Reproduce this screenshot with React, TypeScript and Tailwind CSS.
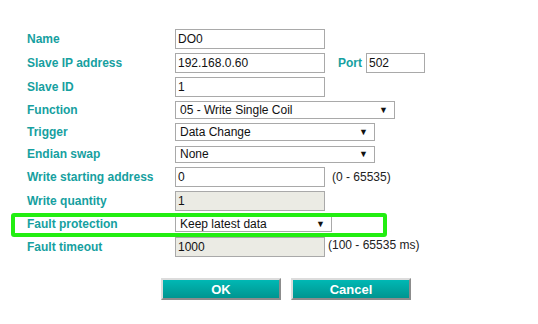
const labelCls = "w-[148px] shrink-0 text-[12px] font-bold text-[#16a0a0]"

function TextBox({ value, width = "w-[150px]", disabled = false }: { value: string; width?: string; disabled?: boolean }) {
  return (
    <div
      className={`${width} h-[20px] border border-[#a9a9a9] pl-[2px] flex items-center text-[12px] text-[#111] ${disabled ? "bg-[#ebebe4]" : "bg-white"}`}
    >
      {value}
    </div>
  )
}

function Dropdown({ value, width, height = "h-[18px]" }: { value: string; width: string; height?: string }) {
  return (
    <div className={`${width} ${height} border border-[#a9a9a9] bg-white flex items-center justify-between pl-[4px] pr-[6px] text-[12px] text-[#111]`}>
      <span>{value}</span>
      <span className="text-[9px] leading-none">▼</span>
    </div>
  )
}

function Row({ label, height = "h-[24px]", children }: { label: string; height?: string; children: React.ReactNode }) {
  return (
    <div className={`flex items-center ${height}`}>
      <div className={labelCls}>{label}</div>
      {children}
    </div>
  )
}

export default function App() {
  return (
    <div className="w-[538px] h-[324px] bg-white relative" style={{ fontFamily: '"Liberation Sans", Arial, sans-serif' }}>
      <div className="pt-[27px] pl-[27px] flex flex-col">
        <Row label="Name">
          <TextBox value="DO0" />
        </Row>
        <Row label="Slave IP address">
          <TextBox value="192.168.0.60" />
          <span className="ml-[13px] mr-[4px] text-[12px] font-bold text-[#16a0a0]">Port</span>
          <TextBox value="502" width="w-[59px]" />
        </Row>
        <Row label="Slave ID">
          <TextBox value="1" />
        </Row>
        <Row label="Function" height="h-[22px]">
          <Dropdown value="05 - Write Single Coil" width="w-[220px]" />
        </Row>
        <Row label="Trigger" height="h-[22px]">
          <Dropdown value="Data Change" width="w-[200px]" />
        </Row>
        <Row label="Endian swap" height="h-[22px]">
          <Dropdown value="None" width="w-[200px]" height="h-[17px]" />
        </Row>
        <Row label="Write starting address">
          <TextBox value="0" />
          <span className="ml-[7px] text-[12px] text-[#222]">(0 - 65535)</span>
        </Row>
        <Row label="Write quantity">
          <TextBox value="1" disabled />
        </Row>
        <Row label="Fault protection" height="h-[22px]">
          <Dropdown value="Keep latest data" width="w-[157px]" height="h-[16px]" />
        </Row>
        <Row label="Fault timeout">
          <TextBox value="1000" disabled />
          <span className="ml-[3px] -mt-[4px] text-[12px] text-[#222]">(100 - 65535 ms)</span>
        </Row>
        <div className="flex gap-[10px] ml-[134px] mt-[19px]">
          <button className="w-[120px] h-[22px] border-2 border-t-[#dcdcdc] border-l-[#dcdcdc] border-b-[#8c8c8c] border-r-[#8c8c8c] bg-gradient-to-b from-[#00b8b4] to-[#009590] text-white text-[13px] font-bold leading-none">
            OK
          </button>
          <button className="w-[120px] h-[22px] border-2 border-t-[#dcdcdc] border-l-[#dcdcdc] border-b-[#8c8c8c] border-r-[#8c8c8c] bg-gradient-to-b from-[#00b8b4] to-[#009590] text-white text-[13px] font-bold leading-none">
            Cancel
          </button>
        </div>
      </div>
      <div className="absolute left-[11px] top-[213px] w-[376px] h-[24px] border-[4px] border-[#22ee11] rounded-[3px] pointer-events-none" />
    </div>
  )
}
